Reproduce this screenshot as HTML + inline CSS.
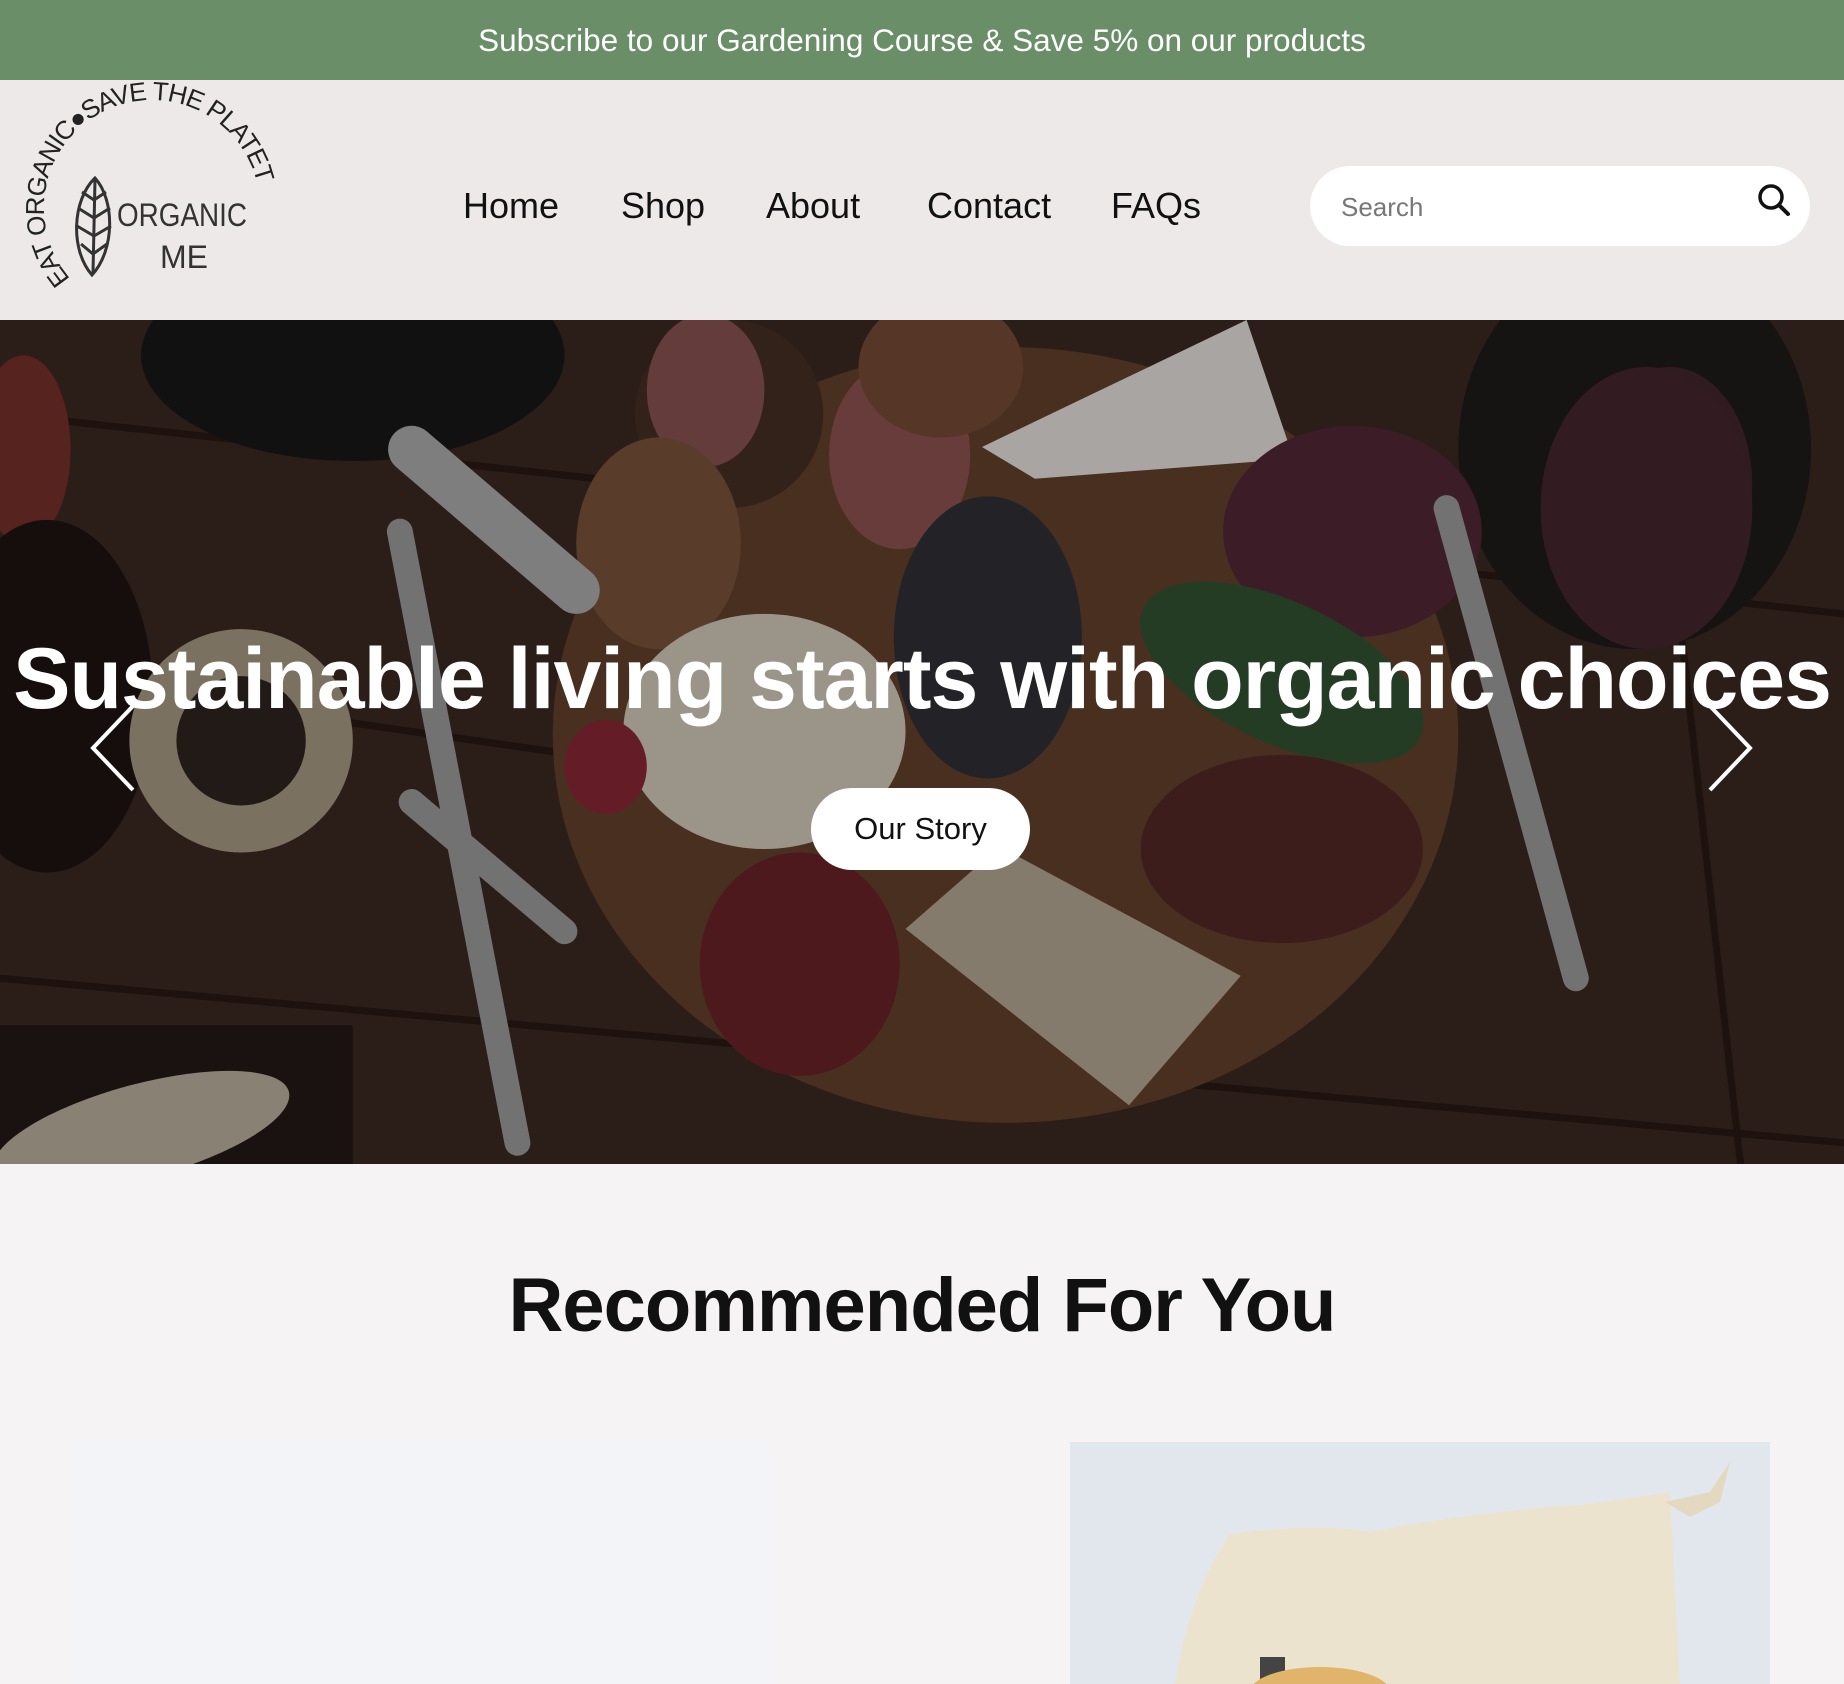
<!DOCTYPE html>
<html><head><meta charset="utf-8">
<style>
*{margin:0;padding:0;box-sizing:border-box}
body{width:1844px;height:1684px;overflow:hidden;background:#f5f3f3;font-family:"Liberation Sans",sans-serif;position:relative}
.banner{position:absolute;left:0;top:0;width:1844px;height:80px;background:#6a8f68;color:#fff;font-size:31.5px;text-align:center;line-height:80px}
.header{position:absolute;left:0;top:80px;width:1844px;height:240px;background:#ece9e8}
.nav a{position:absolute;top:108px;font-size:36px;color:#111;text-decoration:none;line-height:1}
.search{position:absolute;left:1310px;top:86px;width:500px;height:80px;border-radius:40px;background:#fff}
.search span{position:absolute;left:31px;top:26px;font-size:26px;color:#777}
.hero{position:absolute;left:0;top:320px;width:1844px;height:844px;overflow:hidden;background:#33221c}
.hero svg{position:absolute;left:0;top:0}
.title{position:absolute;left:0;top:310px;width:1844px;text-align:center;color:#fff;font-size:86px;font-weight:bold;letter-spacing:-1px;white-space:nowrap}
.btn{position:absolute;left:811px;top:468px;width:219px;height:82px;border-radius:41px;background:#fff;color:#111;font-size:31px;text-align:center;line-height:82px}
h2{position:absolute;left:0;top:1262px;width:1844px;text-align:center;font-size:76px;font-weight:bold;color:#111;letter-spacing:-1px}
.card1{position:absolute;left:73px;top:1442px;width:698px;height:242px;background:#f2f4f7}
.card2{position:absolute;left:1070px;top:1442px;width:700px;height:242px;background:#e2e7ee;overflow:hidden}
</style></head><body>
<div class="banner">Subscribe to our Gardening Course &amp; Save 5% on our products</div>
<div class="header">
<svg width="300" height="240" viewBox="0 80 300 240" style="position:absolute;left:0;top:0">
<defs><path id="arc" d="M70.5,278.9 A108,108 0 1 1 257.2,183.7"/></defs>
<text font-family="Liberation Sans,sans-serif" font-size="26" fill="#222"><textPath href="#arc" textLength="392" lengthAdjust="spacing">EAT ORGANIC●SAVE THE PLATET</textPath></text>
<g fill="none" stroke="#333" stroke-width="3">
<path d="M95,178 C72,200 70,250 92,275 C115,250 115,200 95,178 Z"/>
<path d="M95,180 L93,273"/>
<path d="M94,200 L82,192 M94,200 L106,192 M94,218 L78,208 M94,218 L110,208 M94,236 L77,226 M94,236 L111,226 M93,254 L81,244 M93,254 L107,244"/>
</g>
<text x="117" y="226" font-family="Liberation Sans,sans-serif" font-size="32" fill="#333" textLength="130" lengthAdjust="spacingAndGlyphs">ORGANIC</text>
<text x="160" y="268" font-family="Liberation Sans,sans-serif" font-size="32" fill="#333">ME</text>
</svg>
<div class="nav">
<a style="left:463px">Home</a><a style="left:621px">Shop</a><a style="left:766px">About</a><a style="left:927px">Contact</a><a style="left:1111px">FAQs</a>
</div>
<div class="search"><span>Search</span>
<svg width="40" height="40" viewBox="0 0 40 40" style="position:absolute;left:444px;top:14px"><circle cx="17" cy="17" r="11" fill="none" stroke="#111" stroke-width="3.5"/><path d="M25 25 L34 34" stroke="#111" stroke-width="4" stroke-linecap="round"/></svg>
</div>
</div>
<div class="hero">
<svg width="1844" height="844" viewBox="0 0 1568 718" preserveAspectRatio="none">
<rect width="1568" height="718" fill="#35241d"/>
<g stroke="#241710" stroke-width="6"><path d="M0,80 L1568,250"/><path d="M0,300 L700,400"/><path d="M0,560 L1568,700"/><path d="M1400,0 L1480,718"/></g>
<ellipse cx="300" cy="30" rx="180" ry="90" fill="#171515"/>
<ellipse cx="1390" cy="110" rx="150" ry="170" fill="#1b1818"/>
<ellipse cx="1420" cy="140" rx="70" ry="100" fill="#3a2128"/>
<ellipse cx="20" cy="110" rx="40" ry="80" fill="#6b2b26"/>
<ellipse cx="40" cy="320" rx="90" ry="150" fill="#1a1210"/>
<circle cx="205" cy="358" r="95" fill="#978a76"/>
<circle cx="205" cy="358" r="55" fill="#2a201b"/>
<ellipse cx="855" cy="353" rx="385" ry="330" fill="#5a3a26"/>
<ellipse cx="620" cy="80" rx="80" ry="80" fill="#3e2a1f"/>
<ellipse cx="600" cy="60" rx="50" ry="65" fill="#7b4a48"/>
<ellipse cx="765" cy="115" rx="60" ry="80" fill="#7f4a48"/>
<ellipse cx="800" cy="40" rx="70" ry="60" fill="#6a4430"/>
<ellipse cx="560" cy="190" rx="70" ry="90" fill="#6e4a34"/>
<polygon points="835,108 1060,0 1100,118 880,135" fill="#cfcac6"/>
<ellipse cx="1150" cy="180" rx="110" ry="90" fill="#4a2430"/>
<ellipse cx="1400" cy="160" rx="90" ry="120" fill="#3e2229"/>
<ellipse cx="1090" cy="300" rx="130" ry="60" fill="#2d4a2b" transform="rotate(25 1090 300)"/>
<ellipse cx="840" cy="270" rx="80" ry="120" fill="#2b2b30"/>
<ellipse cx="650" cy="350" rx="120" ry="100" fill="#bdb5a8"/>
<ellipse cx="1090" cy="450" rx="120" ry="80" fill="#4a2422"/>
<ellipse cx="680" cy="548" rx="85" ry="95" fill="#5e1f24"/>
<ellipse cx="515" cy="380" rx="35" ry="40" fill="#7a2430"/>
<polygon points="770,518 850,448 1055,558 960,668" fill="#a39784"/>
<g stroke="#8b8b8b" stroke-width="22" stroke-linecap="round"><path d="M350,410 L480,520"/><path d="M340,180 L440,700"/><path d="M1230,160 L1340,560"/></g>
<path d="M350,110 L490,230" stroke="#9a9a9a" stroke-width="40" stroke-linecap="round"/>
<rect x="0" y="600" width="300" height="118" fill="#201714"/>
<ellipse cx="120" cy="690" rx="130" ry="40" fill="#a79e8e" transform="rotate(-15 120 690)"/>
<rect width="1568" height="718" fill="#000" opacity="0.18"/>
</svg>
<div class="title">Sustainable living starts with organic choices</div>
<svg width="50" height="90" viewBox="0 0 50 90" style="position:absolute;left:88px;top:383px"><path d="M45,3 L5,45 L45,87" fill="none" stroke="#fff" stroke-width="4"/></svg>
<svg width="50" height="90" viewBox="0 0 50 90" style="position:absolute;left:1705px;top:383px"><path d="M5,3 L45,45 L5,87" fill="none" stroke="#fff" stroke-width="4"/></svg>
<div class="btn">Our Story</div>
</div>
<h2>Recommended For You</h2>
<div class="card1"></div>
<div class="card2">
<svg width="700" height="242" viewBox="0 0 700 242">
<path d="M160,92 Q250,80 300,90 Q400,70 520,62 L600,50 L610,242 L105,242 Q120,150 160,92 Z" fill="#ece3cf"/>
<path d="M595,60 L640,50 L660,20 L650,60 L620,75 Z" fill="#e3d8c0"/>
<rect x="190" y="215" width="25" height="27" fill="#444"/>
<ellipse cx="250" cy="250" rx="70" ry="25" fill="#e0b46a"/>
</svg>
</div>
</body></html>
